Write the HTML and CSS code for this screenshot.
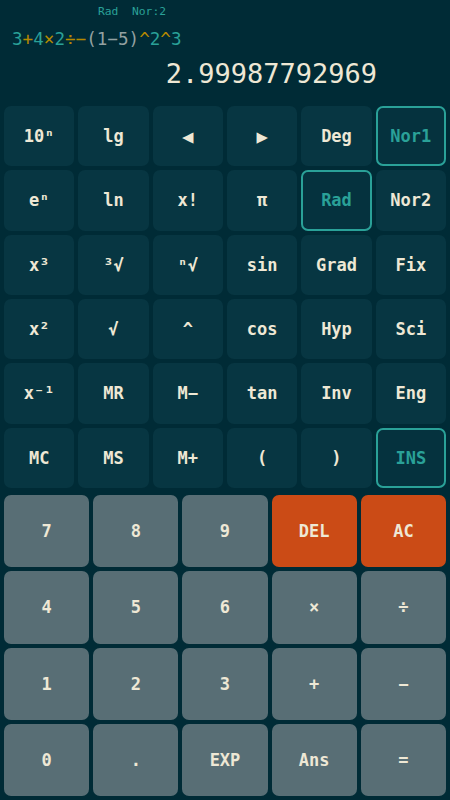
FILE: index.html
```html
<!DOCTYPE html>
<html>
<head>
<meta charset="utf-8">
<link rel="stylesheet" href="styles.css">
</head>
<body>
<div class="app">
  <div class="display">
    <div class="status"><span>Rad</span><span>Nor:2</span></div>
    <div class="expr"><span class="n">3</span><span class="o">+</span><span class="n">4</span><span class="o">×</span><span class="n">2</span><span class="o">÷−</span><span class="p">(1−5)</span><span class="o">^</span><span class="n">2</span><span class="o">^</span><span class="n">3</span></div>
    <div class="result">2.99987792969</div>
  </div>
  <div class="sci">
    <div class="key">10ⁿ</div>
    <div class="key">lg</div>
    <div class="key tri">◀</div>
    <div class="key tri">▶</div>
    <div class="key">Deg</div>
    <div class="key on">Nor1</div>

    <div class="key">eⁿ</div>
    <div class="key">ln</div>
    <div class="key">x!</div>
    <div class="key">π</div>
    <div class="key on">Rad</div>
    <div class="key">Nor2</div>

    <div class="key">x³</div>
    <div class="key">³√</div>
    <div class="key">ⁿ√</div>
    <div class="key">sin</div>
    <div class="key">Grad</div>
    <div class="key">Fix</div>

    <div class="key">x²</div>
    <div class="key">√</div>
    <div class="key">^</div>
    <div class="key">cos</div>
    <div class="key">Hyp</div>
    <div class="key">Sci</div>

    <div class="key">x⁻¹</div>
    <div class="key">MR</div>
    <div class="key">M−</div>
    <div class="key">tan</div>
    <div class="key">Inv</div>
    <div class="key">Eng</div>

    <div class="key">MC</div>
    <div class="key">MS</div>
    <div class="key">M+</div>
    <div class="key">(</div>
    <div class="key">)</div>
    <div class="key on">INS</div>
  </div>
  <div class="num">
    <div class="nkey">7</div>
    <div class="nkey">8</div>
    <div class="nkey">9</div>
    <div class="nkey warn">DEL</div>
    <div class="nkey warn">AC</div>

    <div class="nkey">4</div>
    <div class="nkey">5</div>
    <div class="nkey">6</div>
    <div class="nkey">×</div>
    <div class="nkey">÷</div>

    <div class="nkey">1</div>
    <div class="nkey">2</div>
    <div class="nkey">3</div>
    <div class="nkey">+</div>
    <div class="nkey">−</div>

    <div class="nkey">0</div>
    <div class="nkey">.</div>
    <div class="nkey">EXP</div>
    <div class="nkey">Ans</div>
    <div class="nkey">=</div>
  </div>
</div>
</body>
</html>
```
FILE: styles.css
```css
html, body {
  margin: 0;
  padding: 0;
  background: #002b36;
}
.app {
  width: 450px;
  height: 800px;
  display: flex;
  flex-direction: column;
  font-family: "DejaVu Sans Mono", monospace;
  color: #eee8d5;
}
.display {
  height: 102px;
  box-sizing: border-box;
  padding-top: 5px;
}
.status {
  font-size: 11.3px;
  line-height: 14px;
  color: #2aa198;
  padding-left: 98px;
  display: flex;
  gap: 13.6px;
}
.expr {
  margin-top: 9px;
  padding-left: 12px;
  font-size: 17.6px;
  line-height: 22px;
}
.expr .n { color: #2aa198; }
.expr .o { color: #b58900; }
.expr .p { color: #93a1a1; }
.result {
  margin-top: 8px;
  font-size: 27px;
  line-height: 32px;
  text-align: right;
  padding-right: 73px;
}
.sci {
  height: 382px;
  margin: 4px 4px 0;
  display: grid;
  grid-template-columns: repeat(6, 1fr);
  grid-template-rows: repeat(6, 1fr);
  gap: 4px;
}
.key {
  background: #073642;
  border-radius: 7px;
  display: flex;
  align-items: center;
  justify-content: center;
  font-weight: bold;
  font-size: 17px;
  box-sizing: border-box;
}
.key.tri {
  font-size: 19px;
}
.key.on {
  border: 2px solid #2aa198;
  color: #2aa198;
  background: #05323e;
}
.num {
  height: 301px;
  margin: 7px 4px 4px;
  display: grid;
  grid-template-columns: repeat(5, 1fr);
  grid-template-rows: repeat(4, 1fr);
  gap: 4px;
}
.nkey {
  background: #586e75;
  border-radius: 7px;
  display: flex;
  align-items: center;
  justify-content: center;
  font-weight: bold;
  font-size: 17px;
}
.nkey.warn {
  background: #cb4b16;
}
```
